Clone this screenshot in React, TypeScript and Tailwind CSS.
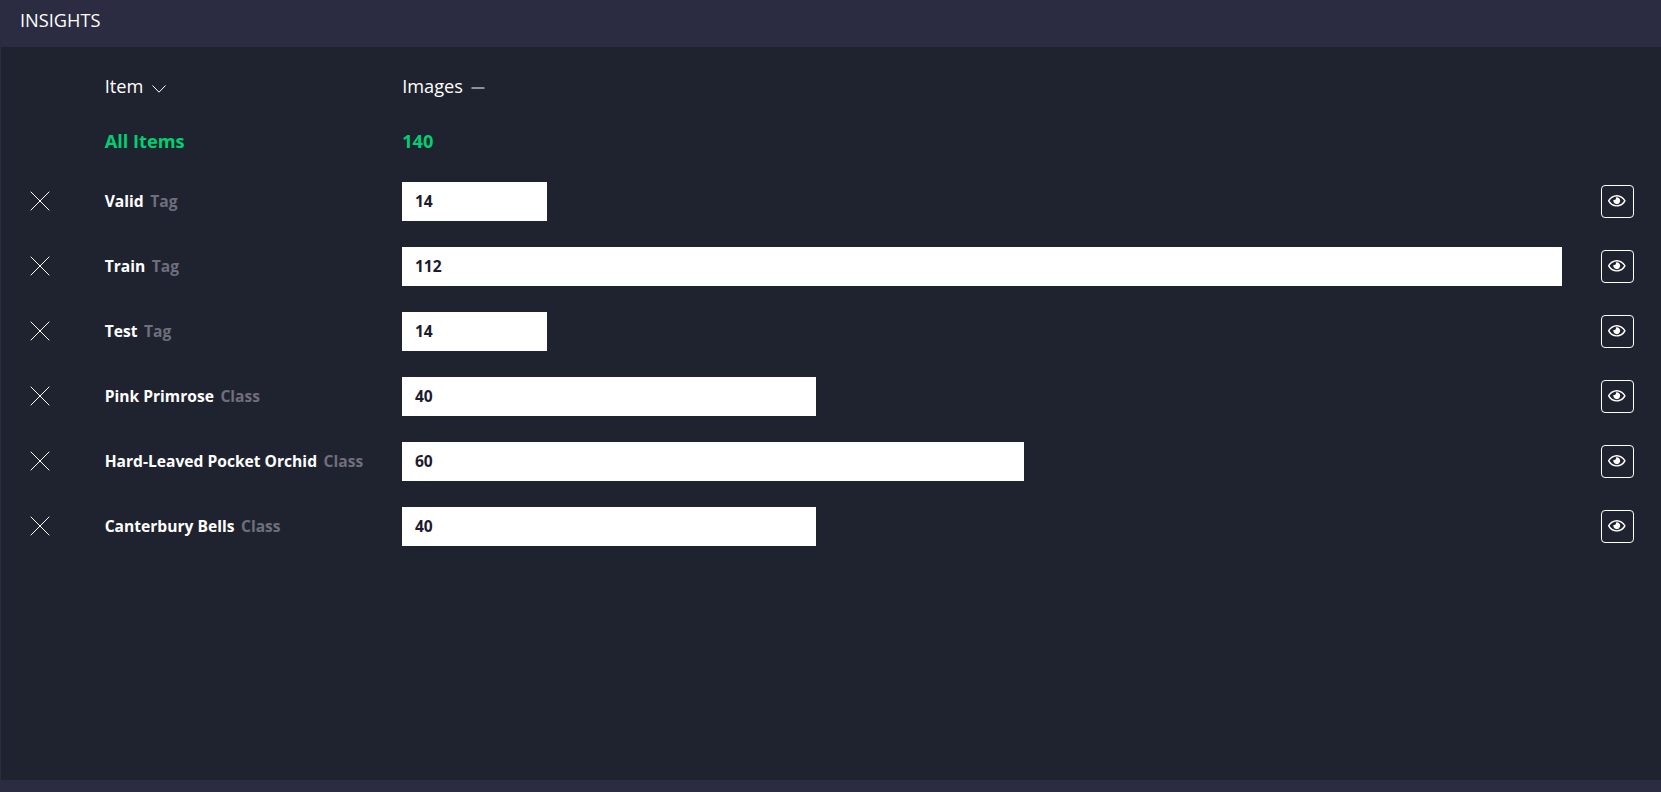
import { FaRegEye } from "react-icons/fa";

type Row = { name: string; kind: "Tag" | "Class"; count: number };

const rows: Row[] = [
  { name: "Valid", kind: "Tag", count: 14 },
  { name: "Train", kind: "Tag", count: 112 },
  { name: "Test", kind: "Tag", count: 14 },
  { name: "Pink Primrose", kind: "Class", count: 40 },
  { name: "Hard-Leaved Pocket Orchid", kind: "Class", count: 60 },
  { name: "Canterbury Bells", kind: "Class", count: 40 },
];

const max = Math.max(...rows.map((row) => row.count));

function CloseIcon() {
  return (
    <svg width="20" height="20" viewBox="0 0 20 20" fill="none" stroke="white" strokeWidth="1">
      <path d="M.7.7l18.6 18.6M19.3.7L.7 19.3" />
    </svg>
  );
}

function InsightRow({ row }: { row: Row }) {
  return (
    <div className="flex h-[39px] items-center">
      <button className="mb-px ml-[29px] mr-[54.7px] size-5 shrink-0" aria-label="Remove">
        <CloseIcon />
      </button>
      <div className="mb-px w-[297.45px] shrink-0 whitespace-nowrap text-[15.6px] font-bold leading-[22px]">
        {row.name} <span className="ml-[2.5px] text-[#6f6e7d]">{row.kind}</span>
      </div>
      <div className="h-full w-[1160px] shrink-0">
        <div
          className="flex h-full items-center bg-white pb-px pl-[12.8px] text-[15.6px] font-bold leading-[22px] text-[#1d1b2d]"
          style={{ width: `${(row.count / max) * 100}%` }}
        >
          {row.count}
        </div>
      </div>
      <button
        className="ml-[38.85px] flex size-[33px] shrink-0 items-center justify-center rounded-[4px] border border-white pb-[0.5px] pr-[0.5px]"
        aria-label="View"
      >
        <FaRegEye size={17.55} />
      </button>
    </div>
  );
}

export default function App() {
  return (
    <div className="flex h-[792px] flex-col overflow-hidden bg-[#2b2c42] pb-3 pl-px font-['Open_Sans',sans-serif] text-white">
      <header className="h-[47px] shrink-0 pl-[19px] pt-2 text-[18.2px] leading-[25px]">INSIGHTS</header>
      <main className="flex-1 bg-[#1f232f]">
        <div className="flex h-[78px] items-center pl-[103.7px] pt-px text-[18.2px] leading-[25px]">
          <div className="flex w-[297.45px] items-center">
            Item
            <svg className="ml-[9px] mt-1" width="14" height="8" viewBox="0 0 14 8" fill="none" stroke="white">
              <path d="M.5.5L7 7.2L13.5.5" />
            </svg>
          </div>
          <div className="flex items-center">
            Images
            <svg className="ml-2 mt-[3px]" width="14" height="2" viewBox="0 0 14 2" stroke="white">
              <path d="M.5 1h13" />
            </svg>
          </div>
        </div>
        <div className="flex h-[57px] pl-[103.7px] pt-1 text-[18.2px] font-bold leading-[25px] text-[#00cf72]">
          <div className="w-[297.45px]">All Items</div>
          <div>140</div>
        </div>
        <div className="flex flex-col gap-[26px]">
          {rows.map((row) => (
            <InsightRow key={row.name} row={row} />
          ))}
        </div>
      </main>
    </div>
  );
}
